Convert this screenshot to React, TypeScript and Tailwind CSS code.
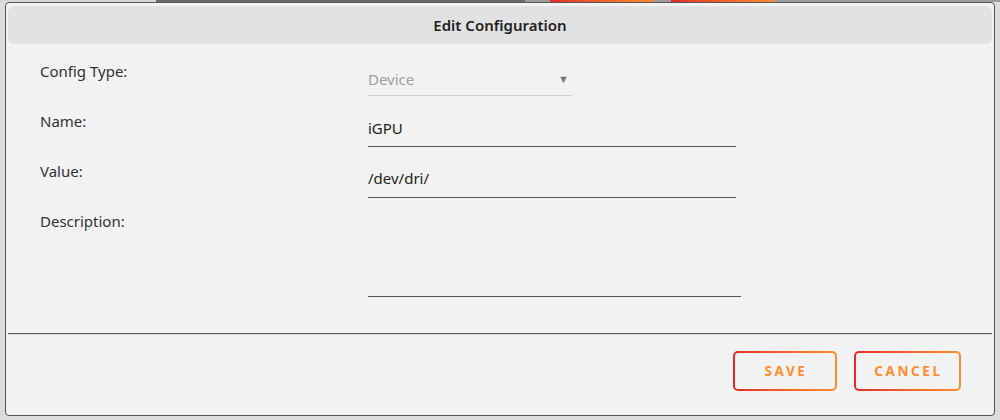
import React from "react";

const font = { fontFamily: '"Noto Sans", "Open Sans", Arial, sans-serif' };

function GradBtn({ label, w }: { label: string; w: string }) {
  return (
    <div className={`rounded-[5px] bg-gradient-to-r from-[#e22828] to-[#ff8c2f] p-[2px] ${w} h-[40px]`}>
      <div className="flex h-full w-full items-center justify-center rounded-[3px] bg-[#f2f2f2] pl-[2px] text-[13.5px] font-bold tracking-[2.6px] text-[#ff8c2f]">
        {label}
      </div>
    </div>
  );
}

export default function App() {
  return (
    <div className="flex h-[420px] w-[1000px] flex-col bg-[#dcdcdc]" style={font}>
      {/* background strip peeking above the dialog */}
      <div className="flex h-[2px] w-full">
        <div className="w-[156px] bg-[#d6d6d6]" />
        <div className="w-[369px] bg-[#6a6a6a]" />
        <div className="w-[25px] bg-[#9c9c9c]" />
        <div className="w-[104px] bg-gradient-to-r from-[#e22828] to-[#ff8c2f]" />
        <div className="w-[17px] bg-[#9c9c9c]" />
        <div className="w-[104px] bg-gradient-to-r from-[#e22828] to-[#ff8c2f]" />
        <div className="flex-1 bg-[#9c9c9c]" />
      </div>
      <div className="ml-[5px] flex h-[414px] w-[990px] flex-col rounded-[4px] border border-[#555] bg-[#f2f2f2] px-[2px] pt-[3px]">
        <div className="flex h-[38px] items-center justify-center rounded-[6px] bg-[#e2e2e2] text-[15px] font-semibold text-[#222]">
          Edit Configuration
        </div>

        <div className="flex flex-col pl-[32px] pt-[19px] text-[15px] text-[#333]">
          <div className="flex h-[50px] items-start">
            <div className="w-[328px] leading-[17px]">Config Type:</div>
            <div className="mt-[6px] flex w-[204px] items-center justify-between border-b border-[#d0d0d0] pb-[6px] leading-[20px] text-[#a0a0a0]">
              <span>Device</span>
              <span className="mr-[3px] text-[11px] text-[#777]">▼</span>
            </div>
          </div>
          <div className="flex h-[50px] items-start">
            <div className="w-[328px] leading-[17px]">Name:</div>
            <div className="mt-[5px] w-[368px] border-b border-[#555] pb-[8px] leading-[20px] text-[15px] text-[#222]">
              iGPU
            </div>
          </div>
          <div className="flex h-[50px] items-start">
            <div className="w-[328px] leading-[17px]">Value:</div>
            <div className="mt-[5px] w-[368px] border-b border-[#555] pb-[9px] leading-[20px] text-[15px] text-[#222]">
              /dev/dri/
            </div>
          </div>
          <div className="flex items-start">
            <div className="w-[328px] leading-[17px]">Description:</div>
            <div className="mt-[5px] h-[79px] w-[373px] border-b border-[#555]" />
          </div>
        </div>

        <div className="mt-[36px] h-[2px] border-t border-[#555] bg-[#dadada]" />

        <div className="flex justify-end gap-[17px] pr-[31px] pt-[16px]">
          <GradBtn label="SAVE" w="w-[104px]" />
          <GradBtn label="CANCEL" w="w-[107px]" />
        </div>
      </div>
    </div>
  );
}
